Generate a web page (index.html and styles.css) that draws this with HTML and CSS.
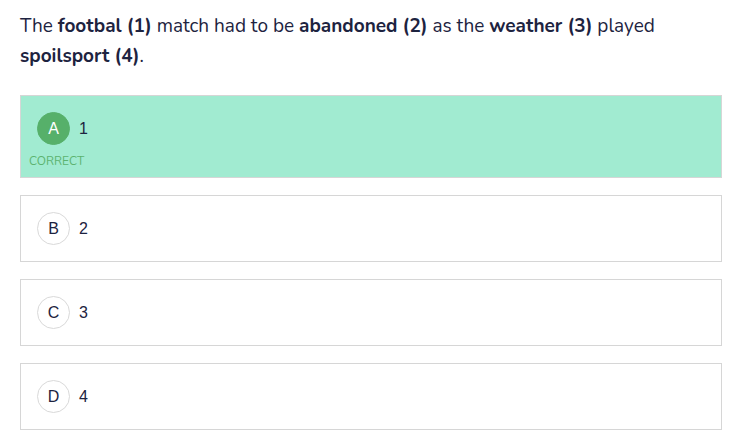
FILE: index.html
```html
<!DOCTYPE html>
<html lang="en">
<head>
    <meta charset="UTF-8">
    <meta name="viewport" content="width=device-width, initial-scale=1.0">
    <title>Question</title>
    <link rel="stylesheet" href="styles.css">
</head>
<body>
    <div class="question">
        <p class="question-text">The <b>footbal (1)</b> match had to be <b>abandoned (2)</b> as the <b>weather (3)</b> played <b>spoilsport (4)</b>.</p>

        <ul class="options">
            <li class="option correct">
                <div class="option-row">
                    <span class="letter">A</span>
                    <span class="answer">1</span>
                </div>
                <div class="status">CORRECT</div>
            </li>
            <li class="option">
                <div class="option-row">
                    <span class="letter">B</span>
                    <span class="answer">2</span>
                </div>
            </li>
            <li class="option">
                <div class="option-row">
                    <span class="letter">C</span>
                    <span class="answer">3</span>
                </div>
            </li>
            <li class="option">
                <div class="option-row">
                    <span class="letter">D</span>
                    <span class="answer">4</span>
                </div>
            </li>
        </ul>
    </div>
</body>
</html>
```

FILE: styles.css
```css
body {
    margin: 0;
    background-color: #ffffff;
    color: #1d2340;
    font-family: 'Nunito', 'Lato', sans-serif;
}

.question {
    padding: 11px 19px 0 20px;
}

.question-text {
    margin: 0 0 24px;
    font-size: 19px;
    line-height: 30px;
}

.question-text b {
    font-weight: 700;
}

.options {
    list-style-type: none;
    margin: 0;
    padding: 0;
    display: flex;
    flex-direction: column;
    gap: 17px;
}

.option {
    border: 1px solid #d6d6d6;
    padding: 16px;
    background-color: #ffffff;
}

.option.correct {
    background-color: #a1ebd1;
    padding-bottom: 8px;
}

.option-row {
    display: flex;
    align-items: center;
    gap: 9px;
}

.letter {
    width: 31px;
    height: 31px;
    border: 1px solid #d9d9d9;
    border-radius: 50%;
    display: flex;
    align-items: center;
    justify-content: center;
    font-family: 'Liberation Sans', Arial, sans-serif;
    font-size: 16px;
    color: #1d2340;
    background-color: #ffffff;
}

.correct .letter {
    background-color: #56b06a;
    border-color: #56b06a;
    color: #ffffff;
}

.answer {
    font-family: 'Liberation Sans', Arial, sans-serif;
    font-size: 16px;
}

.status {
    margin: 8px 0 0 -8px;
    font-size: 12px;
    line-height: 16px;
    color: #5cb370;
}
```
